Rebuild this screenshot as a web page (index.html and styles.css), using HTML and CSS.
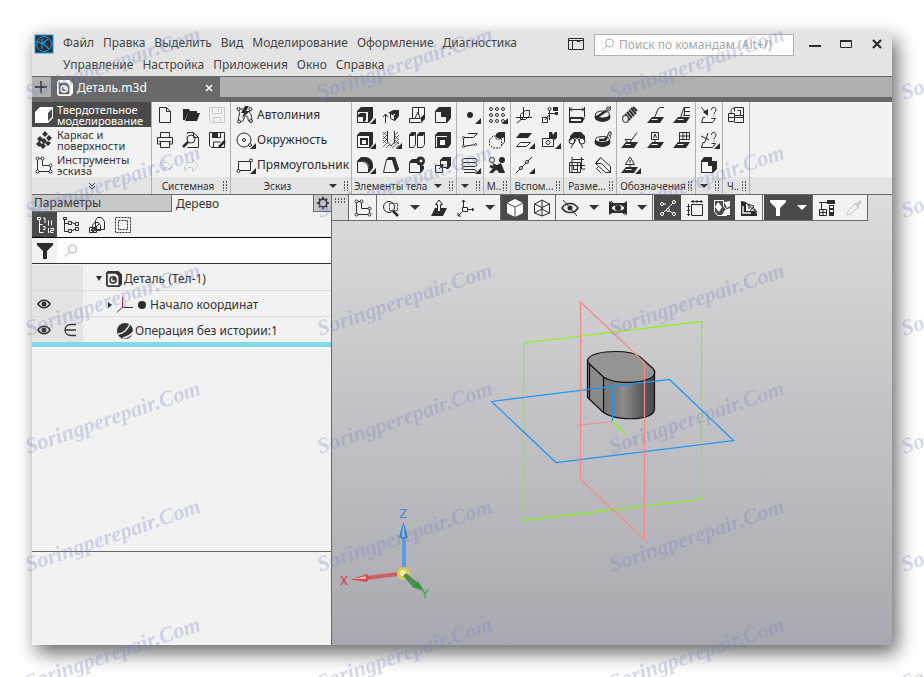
FILE: index.html
```
<!DOCTYPE html>
<html lang="ru">
<head>
    <meta charset="UTF-8">
    <meta name="viewport" content="width=device-width, initial-scale=1.0">
    <title>Деталь.m3d</title>
    <link rel="stylesheet" href="styles.css">
</head>
<body>
    <!-- Icon sprite -->
    <svg class="sprite" aria-hidden="true">
        <symbol id="i-new" viewBox="0 0 18 18"><path d="M3.5 1.5h7l4 4v11h-11zM10.5 1.5v4h4"/></symbol>
        <symbol id="i-open" viewBox="0 0 18 18"><path class="f" d="M1 3h6l1 2h7v2H6L3 14H1z"/><path class="f" d="M6 7h12l-3 8H3z"/></symbol>
        <symbol id="i-save" viewBox="0 0 18 18"><path d="M1.5 1.5h15v15h-13l-2-2zM4.5 1.5v6h9v-6M5.5 16.5v-5h7v5M10.5 3v3"/></symbol>
        <symbol id="i-print" viewBox="0 0 18 18"><path d="M4.5 6V1.5h9V6M4.5 13h-3V6.5h15V13h-3M4.5 10.5h9v6h-9zM3 10.5h12"/></symbol>
        <symbol id="i-preview" viewBox="0 0 18 18"><path d="M5.5 3V1.5h6l5 5v10h-11M11.5 1.5v5h5"/><circle cx="9" cy="8" r="4"/><path class="b" d="M6 11l-5 5"/></symbol>
        <symbol id="i-saveas" viewBox="0 0 18 18"><path d="M1.5 1.5h15v15h-13l-2-2z"/><path class="f" d="M4 1h9v6H4z"/><path class="w" d="M10 2h2v4h-2z"/><path d="M5.5 16v-5h7"/><path class="b" d="M17 10l-6 6"/></symbol>
        <symbol id="i-undo" viewBox="0 0 18 18"><path d="M8.5 3.5l-6 6 6 6v-4h3l3 3v-5l-3-3h-3z"/></symbol>
        <symbol id="i-redo" viewBox="0 0 18 18"><path d="M10.5 3.5l6 6-6 6v-4h-4l-4 3v-4l4-4h4z"/></symbol>

        <symbol id="i-solid" viewBox="0 0 18 18"><path class="f" d="M0 6l5-5h13v11l-5 5H0z"/><path class="k" d="M13 7l4-4v8l-4 4z"/></symbol>
        <symbol id="i-surface" viewBox="0 0 18 18"><path class="f" d="M10 0l3 3-3 3-3-3zM5 5l3 3-3 3-3-3zM14 4l3 3-3 3-3-3zM9 7l3 3-3 3-3-3zM4 10l3 3-3 3-3-3zM13 10l3 2-3 3-3-3zM8 12l3 3-3 3-3-3z"/></symbol>
        <symbol id="i-sketch" viewBox="0 0 18 18"><path d="M2.5 2.5h5v7h8v6h-13z"/><circle class="p" cx="2.5" cy="2.5" r="1.5"/><circle class="p" cx="7.5" cy="2.5" r="1.5"/><circle class="p" cx="15.5" cy="9.5" r="1.5"/><circle class="p" cx="15.5" cy="15.5" r="1.5"/><circle class="p" cx="2.5" cy="15.5" r="1.5"/></symbol>

        <symbol id="i-auto" viewBox="0 0 18 18"><path d="M2 3h5M2.5 4c3 4-1 6 0 11M14 4c-2 3 4 6 1 11M4 16c5 0 3-6 6-6s1 5 4 6"/><circle class="p" cx="2.5" cy="3" r="1.5"/><circle class="p" cx="14.5" cy="3" r="1.5"/><circle class="p" cx="3" cy="15.5" r="1.5"/><circle class="p" cx="15" cy="15" r="1.5"/><path class="f" d="M9 0h4L10 5h4L6 12l2-5H5z"/></symbol>
        <symbol id="i-circle" viewBox="0 0 18 18"><circle cx="8" cy="9" r="7"/><circle cx="8" cy="9" r="1.5"/><circle class="p" cx="14" cy="14" r="1.5"/></symbol>
        <symbol id="i-rect" viewBox="0 0 18 18"><path d="M2.5 5.5h12v9h-12z"/><circle class="p" cx="15" cy="4.5" r="1.5"/><circle class="p" cx="2.5" cy="15" r="1.5"/></symbol>

        <symbol id="i-extrude" viewBox="0 0 18 18"><path class="f" d="M1 5l4-4h12v11l-4 5V6H1z"/><path class="p" d="M1.5 5.5h11v11h-11z"/><path class="f" d="M1 10l3-3h6v7l-3 3v-7z"/><path class="p" d="M1.5 10.5h6v6h-6z"/></symbol>
        <symbol id="i-bend" viewBox="0 0 18 18"><path d="M3.5 17V8M1 11l2.5-3L6 11M8.5 7.5l4 2v5l-4-2z"/><path class="f" d="M6 7l5-3h6l-4 4H9zM13 8l4-4v6l-4 5z"/></symbol>
        <symbol id="i-rib" viewBox="0 0 18 18"><path d="M4.5 12.5v-11h12v11l-4 4h-11v-4zM1.5 12.5h11l4-4M10.5 2v7M7 12l3-6 2 6"/><path class="f" d="M13 12l4-4v5l-4 4z"/></symbol>
        <symbol id="i-cut" viewBox="0 0 18 18"><path class="f" d="M1 5l4-4h12v11l-4 5V6H1z"/><path class="p" d="M1.5 5.5h11v11h-11z"/><path class="f" d="M7 5h6v6H7z"/></symbol>
        <symbol id="i-frame" viewBox="0 0 18 18"><path class="f" d="M1 4l3-3h13v12l-3 4H1z"/><path class="w" d="M2 5h11v11H2z"/><path class="f" d="M4 7h8v7H4z"/><path class="w" d="M6 9h4v4H6z"/></symbol>
        <symbol id="i-hole" viewBox="0 0 18 18"><path class="t" d="M1 4l3-3M1 8l4-4M1 12l4-4M1 16l4-4M4 17l3-3M12 5l4-4M12 9l5-5M12 13l5-5M10 17l7-6M14 17l3-3M1 1l4 4M1 5l4 4M1 9l4 4M13 5l4 4M13 9l4 4"/><path class="p" d="M5.5 0v11l3.5 4 3.5-4V0"/></symbol>
        <symbol id="i-slabs" viewBox="0 0 18 18"><path d="M1.5 4.5l2-3h4v12l-2 3h-4zM9.5 4.5l2-3h5v12l-2 3h-5z"/><path class="f" d="M1 4l3-3h4L6 5H1zM9 4l3-3h5l-2 4H9z"/></symbol>
        <symbol id="i-shell" viewBox="0 0 18 18"><path class="f" d="M1 4l3-3h13v12l-3 4H1z"/><path class="w" d="M2 5h11v1H3v10H2z"/><path class="w" d="M6 9h5v5H6z"/></symbol>
        <symbol id="i-fillet" viewBox="0 0 18 18"><path d="M1.5 5.5v11h11v-4c0-4-3-7-7-7z"/><path class="f" d="M1 5l4-4h4c5 0 8 4 8 8v3l-4 5v-5c0-4-3-7-7-7z"/></symbol>
        <symbol id="i-draft" viewBox="0 0 18 18"><path d="M1.5 16.5l3-13 2-2h6l4 12-3 3z"/><path class="f" d="M4 4l3-3h6l4 12-3 4-4-13z"/></symbol>
        <symbol id="i-ball" viewBox="0 0 18 18"><path d="M1.5 6.5h11v10h-11z"/><path class="f" d="M1 6l3-3h5v3zM13 9l3 1v3l-3 4z"/><circle class="f" cx="12.5" cy="5" r="4.5"/><circle class="p" cx="13" cy="5" r="2"/></symbol>
        <symbol id="i-scale" viewBox="0 0 18 18"><path class="f" d="M6 4l3-3h8v9l-3 3h-2V6H6z"/><path class="p" d="M6.5 4.5h7v7h-7zM1.5 9.5h7v7h-7z"/><path d="M5 13l4-4M6.5 8.5H9V11"/></symbol>

        <symbol id="i-point" viewBox="0 0 18 18"><circle class="f" cx="9" cy="9" r="3"/></symbol>
        <symbol id="i-spline" viewBox="0 0 18 18"><path d="M2.5 6.5h10l4-4H7M2.5 6.5v9l12-2"/><circle class="p" cx="2.5" cy="6.5" r="1"/><circle class="p" cx="2.5" cy="15.5" r="1"/><circle class="p" cx="14.5" cy="13.5" r="1"/></symbol>
        <symbol id="i-spiral" viewBox="0 0 18 18"><path d="M15 2.5H4c-4 0-4 4 0 4h9c4 0 4 4 0 4H4c-4 0-4 3 0 3h9c3 0 3 3 0 3H3M4 6.5h9M4 10.5h9M13 2.5c4 0 4 4 0 4M4 10.5c-4 0-4-4 0-4"/></symbol>
        <symbol id="i-array" viewBox="0 0 18 18"><circle cx="3" cy="3" r="1.5"/><circle cx="9" cy="3" r="1.5"/><circle cx="15" cy="3" r="1.5"/><circle cx="3" cy="9" r="1.5"/><circle cx="9" cy="9" r="1.5"/><circle cx="15" cy="9" r="1.5"/><circle cx="3" cy="15" r="1.5"/><circle cx="9" cy="15" r="1.5"/><circle cx="15" cy="15" r="1.5"/></symbol>
        <symbol id="i-copy3d" viewBox="0 0 18 18"><path class="d" d="M8 5H5L1.5 9v5l4 3h6l2-2V8H8z"/><path d="M13.5 14l3-3V4"/><path class="f" d="M8 3l3-2h6v5l-5 2-4-2z"/></symbol>
        <symbol id="i-mirror" viewBox="0 0 18 18"><circle cx="4" cy="4" r="2.5"/><circle class="f" cx="14" cy="4" r="3"/><path class="f" d="M4 7l5 2 4-2 2 5 2 5h-6l-2-4-4 4H1l5-6z"/><path class="b" d="M2 10l14 6"/></symbol>
        <symbol id="i-plane3" viewBox="0 0 18 18"><path d="M1 11.5h16M8.5 1v11M2 17l6-5M5.5 8.5l5-4h4v5l-4 4h-5z"/></symbol>
        <symbol id="i-lcs" viewBox="0 0 18 18"><path d="M8.5 2v12M7 7.5h9M1.5 11.5h5v5h-5zM4 14l5-6"/><path class="f" d="M12 1h5v4h-5zM14 6h3v3h-3z"/><circle class="p" cx="8.5" cy="3" r="1.5"/></symbol>
        <symbol id="i-planes" viewBox="0 0 18 18"><path class="f" d="M5 2h12l-4 5H1z"/><path d="M5.5 11.5h10l-4 4h-10z"/></symbol>
        <symbol id="i-cam" viewBox="0 0 18 18"><path class="f" d="M8 1h3l1 3 2-3h2v6l-3 2H8z"/><path class="p" d="M1.5 7.5h11v8h-11z"/><circle cx="7" cy="11.5" r="2"/></symbol>
        <symbol id="i-axis" viewBox="0 0 18 18"><path d="M1 17L17 1"/><circle class="p" cx="6" cy="12" r="1.5"/><circle class="p" cx="12" cy="6" r="1.5"/></symbol>
        <symbol id="i-dim1" viewBox="0 0 18 18"><path d="M1.5 1v16M16.5 1v10M2 3.5h14M4 1.5l-2 2 2 2M14 1.5l2 2-2 2M1.5 11.5h14"/><path class="f" d="M1 12h16l-3 5H1z"/><path class="w" d="M3 13h10v2H3z"/></symbol>
        <symbol id="i-dim2" viewBox="0 0 18 18"><ellipse class="f" cx="8.5" cy="11" rx="8" ry="5"/><ellipse class="p" cx="8.5" cy="8.5" rx="7" ry="3.5"/><path class="b" d="M3 11l9-6"/><circle cx="14.5" cy="3" r="2"/><path d="M12 6l5-6"/></symbol>
        <symbol id="i-dim3" viewBox="0 0 18 18"><path class="f" d="M2 5l4-4h7l4 4v5l-3-3H5l-3 3z"/><circle cx="4" cy="10" r="3"/><circle cx="14" cy="10" r="3"/><path d="M9 6l-6 11M9 6l6 11"/></symbol>
        <symbol id="i-dim4" viewBox="0 0 18 18"><ellipse class="f" cx="8.5" cy="11" rx="8" ry="5"/><ellipse class="p" cx="8.5" cy="8.5" rx="7" ry="3"/><path class="b" d="M5 9h6l2-3"/><path d="M13 6l2-5h2v3h-2l2 3"/></symbol>
        <symbol id="i-dim5" viewBox="0 0 18 18"><path d="M1.5 6.5h11v10h-11zM4 1v16M4 3.5h12M13.5 1v12h4M5.5 9.5h4v4h-4zM1 9.5h16M9.5 6v11"/></symbol>
        <symbol id="i-dim6" viewBox="0 0 18 18"><path d="M6.5 1.5l10 9v6h-5l-10-9zM1.5 7.5h6l9 9M6.5 1.5l-5 6M3 13l4 4M4 11l-2 2"/></symbol>
        <symbol id="i-thread" viewBox="0 0 18 18"><path class="h" d="M2 10l5 6M4 8l5 6M6 6l5 6M8 4l5 6M10 2l5 6M12 1l4 4"/><ellipse class="p" cx="4.5" cy="13" rx="3" ry="3.5"/></symbol>
        <symbol id="i-rough" viewBox="0 0 18 18"><path d="M7 13l4-10 2-1.5h4"/><path class="f" d="M5 11h12l-4 6H0z"/><path class="w" d="M5 13h6l-1 1H4z"/></symbol>
        <symbol id="i-leader" viewBox="0 0 18 18"><path d="M7 13l4-11.5h6M11.5 5.5H17M10 9.5h7M11.5 1v9"/><path class="f" d="M5 11h12l-4 6H0z"/><path class="w" d="M5 13h6l-1 1H4z"/></symbol>
        <symbol id="i-base" viewBox="0 0 18 18"><path class="f" d="M5 11h12l-4 6H0z"/><path class="w" d="M5 13h5l-1 1H4z"/><path d="M4 8.5l4 4 8-11M4 8.5h7"/></symbol>
        <symbol id="i-mark" viewBox="0 0 18 18"><path class="f" d="M5 11h12l-4 6H0z"/><path class="w" d="M5 13h6l-1 1H4z"/><path class="p" d="M4.5 1.5h7v7h-7z"/><path d="M8 9v4M6.5 7L8 3l1.5 4"/></symbol>
        <symbol id="i-tol" viewBox="0 0 18 18"><path class="f" d="M5 11h12l-4 6H0z"/><path class="w" d="M5 13h6l-1 1H4z"/><path class="p" d="M6.5 1.5h10v7h-10z"/><path d="M6.5 5h10M10 1.5v7M13.5 1.5v7M6.5 8v5"/></symbol>
        <symbol id="i-weld" viewBox="0 0 18 18"><path class="f" d="M5 11h12l-4 6H0z"/><path class="w" d="M5 13h6l-1 1H4z"/><path class="p" d="M9 1L4.5 8.5h9z"/><path d="M9 4v3M9 8v5M7 11l2 2 2-2"/></symbol>
        <symbol id="i-info" viewBox="0 0 18 18"><path d="M1 1l6 7M11.5 4c0-4 5-3 4.5 0 0 2-2 2-2 4M14 9.5v1M5 11.5h-2L1.5 16.5h11l3-4h-4"/><path class="f" d="M3 6l5-3v7z"/></symbol>
        <symbol id="i-info2" viewBox="0 0 18 18"><path d="M1 5l8 4M8 2l-3 9M11.5 4c0-4 5-3 4.5 0 0 2-2 2-2 4M14 9.5v1M5 11.5h-2L1.5 16.5h11l3-4h-4"/></symbol>
        <symbol id="i-body" viewBox="0 0 18 18"><path class="f" d="M1 5l3-4h8v4h5v8l-4 4H1z"/><path class="w" d="M2 6h6v4h4v6H2z"/></symbol>
        <symbol id="i-draw" viewBox="0 0 18 18"><path d="M1.5 7.5h6v8h-6zM7.5 5.5v-4h9v15h-9M7.5 9.5h9M10.5 4.5h3v5M1.5 11.5h15M4 7c0-4 1-5 4-5"/></symbol>

        <symbol id="i-doc" viewBox="0 0 18 18"><path class="f" d="M5 0h9l4 4v11l-3 3H2l-2-2V2l2-2z"/><path class="c" d="M2 3h9l3 3v10H2z"/><circle class="r" cx="8" cy="10" r="3.5"/><circle class="f" cx="9" cy="9" r="2"/></symbol>
        <symbol id="i-lens" viewBox="0 0 14 14"><circle cx="8.5" cy="5" r="4"/><path d="M5.5 8L1 12.5"/></symbol>
        <symbol id="i-tree1" viewBox="0 0 18 18"><path d="M3.5 3v13.5h4M3.5 8.5h3M1.5 1.5h3v2h-3zM7 2h2v5M12.5 4.5v5M15.5 4.5v5M12.5 12v5M14.5 12.5h3v2h-3v2h3M7 10.5h2v3H7"/></symbol>
        <symbol id="i-tree2" viewBox="0 0 18 18"><path d="M2.5 4v11.5h5M2.5 7.5h5M9 6l4 2M9 15l5-2"/><path class="p" d="M1.5 1.5h3v2h-3zM6.5 5.5h3v3h-3zM6.5 13.5h3v3h-3zM13.5 6.5h3v3h-3zM13.5 11.5h3v3h-3z"/></symbol>
        <symbol id="i-tree3" viewBox="0 0 18 18"><path class="p" d="M7.5 4.5l2-3h4l3 4v8h-9zM4.5 9.5l2-3h4l2 3v5h-8zM1.5 11.5h7v5h-7z"/><circle cx="5" cy="14" r="1.5"/><path d="M6 13l5-5"/></symbol>
        <symbol id="i-tree4" viewBox="0 0 18 18"><path class="d" d="M1.5 1.5h15v15h-15zM4.5 4.5h9v9h-9z"/></symbol>
        <symbol id="i-funnel" viewBox="0 0 18 18"><path class="f" d="M1 1h16v2l-6 6v8H7V9L1 3z"/></symbol>
        <symbol id="i-gear" viewBox="0 0 18 18"><circle class="g" cx="9" cy="9" r="5"/><path class="h" d="M9 1v3M9 14v3M1 9h3M14 9h3M3.5 3.5l2 2M12.5 12.5l2 2M14.5 3.5l-2 2M5.5 12.5l-2 2"/></symbol>
        <symbol id="i-eye" viewBox="0 0 14 10"><path class="e" d="M1 5c3-5 9-5 12 0-3 5-9 5-12 0z"/><circle class="f" cx="7" cy="5" r="2.5"/></symbol>
        <symbol id="i-member" viewBox="0 0 14 14"><path class="n" d="M13 1.5H8c-8 0-8 11 0 11h5M2 7h11"/></symbol>
        <symbol id="i-origin" viewBox="0 0 18 18"><path class="m" d="M6.5 1v10"/><path d="M6 11.5h11M6 11.5l-5 5"/></symbol>
        <symbol id="i-op" viewBox="0 0 18 18"><circle class="f" cx="9" cy="9" r="8"/><path class="s" d="M2 12c6 0 9-4 12-10M7 16c5-1 8-3 10-6"/></symbol>

        <symbol id="i-zoom" viewBox="0 0 18 18"><circle cx="7" cy="8" r="5.5"/><path class="b" d="M11 12l5 5"/><path class="d" d="M7.5 4.5h8v7h-8z"/></symbol>
        <symbol id="i-normal" viewBox="0 0 18 18"><path class="f" d="M5 9h12l-4 8H1z"/><path class="p" d="M7.5 12.5v-7h-2L9 1l3.5 4.5h-2v7z"/></symbol>
        <symbol id="i-orient" viewBox="0 0 18 18"><path d="M6.5 8V1M5 3l1.5-2L8 3M11 10.5h6M15 9l2 1.5-2 1.5M5 13l-4 4M1 14v3h3"/><path d="M5.5 8.5h5v4h-5z"/></symbol>
        <symbol id="i-cube" viewBox="0 0 18 18"><path class="f" d="M9 0l8 4v10l-8 4-8-4V4z"/><path class="k2" d="M1 4l8 4 8-4M9 8v10"/></symbol>
        <symbol id="i-wire" viewBox="0 0 18 18"><path d="M9 1l7.5 4v9L9 17l-7.5-3V5zM1.5 5L9 8.5 16.5 5M9 8.5V17M9 1v9l-7.5 4M9 10l7.5 4"/></symbol>
        <symbol id="i-hide" viewBox="0 0 18 18"><path class="e" d="M1 9c4-6 12-6 16 0-4 6-12 6-16 0z"/><circle class="f" cx="9" cy="9" r="2.5"/><path d="M2 1l14 16"/></symbol>
        <symbol id="i-hide2" viewBox="0 0 18 18"><path class="f" d="M0 2l3 2h12l3-2v14l-3-2H3l-3 2z"/><path class="p" d="M2 9c4-5 10-5 14 0-4 5-10 5-14 0z"/><circle class="f" cx="9" cy="9" r="3"/><path d="M2 2l14 14"/></symbol>
        <symbol id="i-snap" viewBox="0 0 18 18"><path d="M3 15L15 3M3 5h4M9 11l6 4"/><circle class="p" cx="3" cy="5" r="1.5"/><circle class="p" cx="15" cy="3" r="1.5"/><circle class="p" cx="3" cy="15" r="1.5"/><circle class="p" cx="9" cy="11" r="1.5"/><circle class="p" cx="15" cy="15" r="1.5"/></symbol>
        <symbol id="i-dims" viewBox="0 0 18 18"><path d="M5.5 5.5h11v11h-11zM5 2.5h12M7 1v3M11 1v3M15 1v3M2.5 5v12M1 7.5h3M1 11.5h3M1 15.5h3"/></symbol>
        <symbol id="i-parts" viewBox="0 0 18 18"><path d="M1.5 1.5h9v6l3 3v6h-9l-3-4z"/><path class="f" d="M2 8l3-5 4 5-3 5zM11 3l6-1v5l-3 2zM12 11l5-2v7H9z"/></symbol>
        <symbol id="i-angle" viewBox="0 0 18 18"><path class="f" d="M1 2l5 1v9h8l3 2v3H1z"/><path class="s" d="M3 7v7h8"/><path d="M5 3l11 10M7 5l7 2-4 5M9 5v5M13 8l4 5"/></symbol>
        <symbol id="i-crane" viewBox="0 0 18 18"><path d="M1 3.5h16M3.5 4v6M1.5 10.5h7v6h-7zM1.5 13.5h7M5 10.5v6"/><path class="f" d="M9 1h8v4H9zM11 6h5v11h-5z"/><path class="w" d="M12 7h3v2h-3zM12 11h3v2h-3z"/></symbol>
        <symbol id="i-pick" viewBox="0 0 18 18"><path d="M2 16l1-4 7-7 3 3-7 7z"/><path class="f" d="M9 4h3l3-3 2 2-3 3v4z"/></symbol>
    </svg>

    <div class="window">
        <header class="titlebar">
            <svg class="logo" viewBox="0 0 20 20"><rect x="1" y="1" width="18" height="18"/><circle cx="10" cy="10" r="7.5"/><path d="M8 5v10M8 10l6-5M9 9l6 6M3 7l5 3"/></svg>
            <nav class="menu">
                <a href="#">Файл</a>
                <a href="#">Правка</a>
                <a href="#">Выделить</a>
                <a href="#">Вид</a>
                <a href="#">Моделирование</a>
                <a href="#">Оформление</a>
                <a href="#">Диагностика</a>
                <a href="#">Управление</a>
                <a href="#">Настройка</a>
                <a href="#">Приложения</a>
                <a href="#">Окно</a>
                <a href="#">Справка</a>
            </nav>
            <button class="win-btn layout-btn" aria-label="Раскладка"><svg viewBox="0 0 16 12"><path d="M.5.5h15v11H.5zM.5 2.5h15M4.5 2.5v9"/><path class="f" d="M8 2h5l-1 2H9z"/></svg></button>
            <label class="search">
                <svg class="lens"><use href="#i-lens"/></svg>
                <input type="text" placeholder="Поиск по командам (Alt+/)" aria-label="Поиск по командам">
            </label>
            <div class="win-controls">
                <button class="win-btn" aria-label="Свернуть"><svg viewBox="0 0 12 12"><path class="f" d="M0 7h12v2H0z"/></svg></button>
                <button class="win-btn" aria-label="Развернуть"><svg viewBox="0 0 12 12"><path d="M.5 2.5h11v7H.5z"/><path class="f" d="M0 2h12v2H0z"/></svg></button>
                <button class="win-btn" aria-label="Закрыть"><svg viewBox="0 0 12 12"><path class="x" d="M2 2l8 8M10 2l-8 8"/></svg></button>
            </div>
        </header>

        <div class="doc-tabs">
            <button class="add-tab" aria-label="Новый документ"><svg viewBox="0 0 12 12"><path d="M6 0v12M0 6h12"/></svg></button>
            <div class="doc-tab">
                <svg class="doc-icon"><use href="#i-doc"/></svg>
                <span>Деталь.m3d</span>
                <button class="close-tab" aria-label="Закрыть вкладку"><svg viewBox="0 0 8 8"><path d="M1 1l6 6M7 1L1 7"/></svg></button>
            </div>
        </div>

        <div class="ribbon">
            <div class="group modes">
                <button class="mode active"><svg class="icon"><use href="#i-solid"/></svg><span>Твердотельное<br>моделирование</span></button>
                <button class="mode"><svg class="icon"><use href="#i-surface"/></svg><span>Каркас и<br>поверхности</span></button>
                <button class="mode"><svg class="icon"><use href="#i-sketch"/></svg><span>Инструменты<br>эскиза</span></button>
                <button class="more" aria-label="Ещё"><svg viewBox="0 0 8 8"><path d="M1 1l3 3 3-3M1 4l3 3 3-3"/></svg></button>
            </div>
            <div class="group">
                <div class="tools cols-3">
                    <button class="tool" aria-label="Создать"><svg class="icon"><use href="#i-new"/></svg></button>
                    <button class="tool" aria-label="Открыть"><svg class="icon"><use href="#i-open"/></svg></button>
                    <button class="tool off" aria-label="Сохранить"><svg class="icon"><use href="#i-save"/></svg></button>
                    <button class="tool" aria-label="Печать"><svg class="icon"><use href="#i-print"/></svg></button>
                    <button class="tool" aria-label="Предварительный просмотр"><svg class="icon"><use href="#i-preview"/></svg></button>
                    <button class="tool" aria-label="Сохранить как"><svg class="icon"><use href="#i-saveas"/></svg></button>
                    <button class="tool off" aria-label="Отменить"><svg class="icon"><use href="#i-undo"/></svg></button>
                    <button class="tool off" aria-label="Повторить"><svg class="icon"><use href="#i-redo"/></svg></button>
                </div>
                <div class="caption"><span>Системная</span><i class="grip"></i></div>
            </div>
            <div class="group sketch">
                <div class="tools cols-1">
                    <button class="tool wide"><svg class="icon"><use href="#i-auto"/></svg>Автолиния</button>
                    <button class="tool wide more-menu"><svg class="icon"><use href="#i-circle"/></svg>Окружность</button>
                    <button class="tool wide more-menu"><svg class="icon"><use href="#i-rect"/></svg>Прямоугольник</button>
                </div>
                <div class="caption"><span>Эскиз</span><i class="arrow"></i><i class="grip"></i></div>
            </div>
            <div class="group">
                <div class="tools cols-4">
                    <button class="tool more-menu" aria-label="Элемент выдавливания"><svg class="icon"><use href="#i-extrude"/></svg></button>
                    <button class="tool" aria-label="Придать толщину"><svg class="icon"><use href="#i-bend"/></svg></button>
                    <button class="tool" aria-label="Ребро жёсткости"><svg class="icon"><use href="#i-rib"/></svg></button>
                    <button class="tool" aria-label="Сечение"><svg class="icon"><use href="#i-cut"/></svg></button>
                    <button class="tool more-menu" aria-label="Вырезать"><svg class="icon"><use href="#i-frame"/></svg></button>
                    <button class="tool more-menu" aria-label="Отверстие"><svg class="icon"><use href="#i-hole"/></svg></button>
                    <button class="tool" aria-label="Разрезать"><svg class="icon"><use href="#i-slabs"/></svg></button>
                    <button class="tool" aria-label="Оболочка"><svg class="icon"><use href="#i-shell"/></svg></button>
                    <button class="tool more-menu" aria-label="Скругление"><svg class="icon"><use href="#i-fillet"/></svg></button>
                    <button class="tool" aria-label="Уклон"><svg class="icon"><use href="#i-draft"/></svg></button>
                    <button class="tool" aria-label="Булева операция"><svg class="icon"><use href="#i-ball"/></svg></button>
                    <button class="tool" aria-label="Масштабирование"><svg class="icon"><use href="#i-scale"/></svg></button>
                </div>
                <div class="caption"><span>Элементы тела</span><i class="arrow"></i><i class="grip"></i></div>
            </div>
            <div class="group">
                <div class="tools cols-1">
                    <button class="tool more-menu" aria-label="Точка"><svg class="icon"><use href="#i-point"/></svg></button>
                    <button class="tool" aria-label="Ломаная"><svg class="icon"><use href="#i-spline"/></svg></button>
                    <button class="tool more-menu" aria-label="Спираль"><svg class="icon"><use href="#i-spiral"/></svg></button>
                </div>
                <div class="caption"><i class="arrow"></i><i class="grip"></i></div>
            </div>
            <div class="group">
                <div class="tools cols-1">
                    <button class="tool more-menu" aria-label="Массив по сетке"><svg class="icon"><use href="#i-array"/></svg></button>
                    <button class="tool" aria-label="Копия"><svg class="icon"><use href="#i-copy3d"/></svg></button>
                    <button class="tool" aria-label="Зеркальный массив"><svg class="icon"><use href="#i-mirror"/></svg></button>
                </div>
                <div class="caption"><span>М..</span><i class="grip"></i></div>
            </div>
            <div class="group">
                <div class="tools cols-2">
                    <button class="tool" aria-label="Контрольная точка"><svg class="icon"><use href="#i-plane3"/></svg></button>
                    <button class="tool" aria-label="Локальная система координат"><svg class="icon"><use href="#i-lcs"/></svg></button>
                    <button class="tool more-menu" aria-label="Плоскость"><svg class="icon"><use href="#i-planes"/></svg></button>
                    <button class="tool more-menu" aria-label="Объект"><svg class="icon"><use href="#i-cam"/></svg></button>
                    <button class="tool more-menu" aria-label="Ось"><svg class="icon"><use href="#i-axis"/></svg></button>
                </div>
                <div class="caption"><span>Вспом...</span><i class="grip"></i></div>
            </div>
            <div class="group">
                <div class="tools cols-2">
                    <button class="tool" aria-label="Линейный размер"><svg class="icon"><use href="#i-dim1"/></svg></button>
                    <button class="tool" aria-label="Диаметр"><svg class="icon"><use href="#i-dim2"/></svg></button>
                    <button class="tool" aria-label="Угловой размер"><svg class="icon"><use href="#i-dim3"/></svg></button>
                    <button class="tool" aria-label="Радиус"><svg class="icon"><use href="#i-dim4"/></svg></button>
                    <button class="tool" aria-label="Авторазмер"><svg class="icon"><use href="#i-dim5"/></svg></button>
                    <button class="tool" aria-label="Размер фаски"><svg class="icon"><use href="#i-dim6"/></svg></button>
                </div>
                <div class="caption"><span>Разме...</span><i class="grip"></i></div>
            </div>
            <div class="group">
                <div class="tools cols-3">
                    <button class="tool" aria-label="Резьба"><svg class="icon"><use href="#i-thread"/></svg></button>
                    <button class="tool" aria-label="Выноска"><svg class="icon"><use href="#i-rough"/></svg></button>
                    <button class="tool" aria-label="Надпись"><svg class="icon"><use href="#i-leader"/></svg></button>
                    <button class="tool" aria-label="Шероховатость"><svg class="icon"><use href="#i-base"/></svg></button>
                    <button class="tool" aria-label="База"><svg class="icon"><use href="#i-mark"/></svg></button>
                    <button class="tool" aria-label="Допуск формы"><svg class="icon"><use href="#i-tol"/></svg></button>
                    <button class="tool more-menu" aria-label="Клеймо"><svg class="icon"><use href="#i-weld"/></svg></button>
                </div>
                <div class="caption"><span>Обозначения</span><i class="grip"></i></div>
            </div>
            <div class="group">
                <div class="tools cols-1">
                    <button class="tool" aria-label="Информация"><svg class="icon"><use href="#i-info"/></svg></button>
                    <button class="tool more-menu" aria-label="Измерение"><svg class="icon"><use href="#i-info2"/></svg></button>
                    <button class="tool" aria-label="Тело"><svg class="icon"><use href="#i-body"/></svg></button>
                </div>
                <div class="caption"><i class="arrow"></i><i class="grip"></i></div>
            </div>
            <div class="group">
                <div class="tools cols-1">
                    <button class="tool" aria-label="Создать чертёж"><svg class="icon"><use href="#i-draw"/></svg></button>
                </div>
                <div class="caption"><span>Ч..</span><i class="grip"></i></div>
            </div>
        </div>

        <main class="work">
            <aside class="panel">
                <div class="panel-tabs">
                    <button class="panel-tab">Параметры</button>
                    <button class="panel-tab current">Дерево</button>
                    <button class="panel-gear" aria-label="Настройки панели"><svg><use href="#i-gear"/></svg></button>
                </div>
                <div class="panel-tools">
                    <button class="tool dark" aria-label="Последовательность"><svg class="icon"><use href="#i-tree1"/></svg></button>
                    <button class="tool" aria-label="Структура"><svg class="icon"><use href="#i-tree2"/></svg></button>
                    <button class="tool" aria-label="Исполнения"><svg class="icon"><use href="#i-tree3"/></svg></button>
                    <button class="tool" aria-label="Область"><svg class="icon"><use href="#i-tree4"/></svg></button>
                </div>
                <div class="filter">
                    <button class="tool" aria-label="Фильтр"><svg class="icon"><use href="#i-funnel"/></svg></button>
                    <label class="filter-box">
                        <svg class="lens"><use href="#i-lens"/></svg>
                        <input type="text" aria-label="Поиск в дереве">
                    </label>
                </div>
                <ul class="tree">
                    <li>
                        <div class="flags"></div>
                        <div class="node root"><i class="open"></i><svg class="doc-icon"><use href="#i-doc"/></svg>Деталь (Тел-1)</div>
                    </li>
                    <li>
                        <div class="flags"><svg class="eye"><use href="#i-eye"/></svg></div>
                        <div class="node origin"><i class="closed"></i><svg class="icon"><use href="#i-origin"/></svg><i class="dot"></i>Начало координат</div>
                    </li>
                    <li>
                        <div class="flags"><svg class="eye"><use href="#i-eye"/></svg><svg class="member"><use href="#i-member"/></svg></div>
                        <div class="node operation"><svg class="icon"><use href="#i-op"/></svg>Операция без истории:1</div>
                    </li>
                </ul>
                <div class="tree-end"></div>
                <div class="panel-bottom"></div>
            </aside>

            <section class="viewport">
                <div class="view-tools">
                    <div class="view-grip"><i></i></div>
                    <div class="set">
                        <button class="tool" aria-label="Эскиз"><svg class="icon"><use href="#i-sketch"/></svg></button>
                    </div>
                    <div class="set">
                        <button class="tool" aria-label="Масштаб"><svg class="icon"><use href="#i-zoom"/></svg></button>
                        <button class="drop" aria-label="Варианты масштаба"><i class="arrow"></i></button>
                        <button class="tool" aria-label="Нормально к"><svg class="icon"><use href="#i-normal"/></svg></button>
                        <button class="tool" aria-label="Ориентация"><svg class="icon"><use href="#i-orient"/></svg></button>
                        <button class="drop" aria-label="Варианты ориентации"><i class="arrow"></i></button>
                    </div>
                    <div class="set">
                        <button class="tool dark" aria-label="Полутоновое"><svg class="icon"><use href="#i-cube"/></svg></button>
                        <button class="tool" aria-label="Каркас"><svg class="icon"><use href="#i-wire"/></svg></button>
                    </div>
                    <div class="set">
                        <button class="tool" aria-label="Скрыть"><svg class="icon"><use href="#i-hide"/></svg></button>
                        <button class="drop" aria-label="Варианты скрытия"><i class="arrow"></i></button>
                        <button class="tool" aria-label="Показать"><svg class="icon"><use href="#i-hide2"/></svg></button>
                        <button class="drop" aria-label="Варианты показа"><i class="arrow"></i></button>
                    </div>
                    <div class="set lit">
                        <button class="tool dark" aria-label="Привязки"><svg class="icon"><use href="#i-snap"/></svg></button>
                        <button class="tool" aria-label="Размеры"><svg class="icon"><use href="#i-dims"/></svg></button>
                        <button class="tool dark" aria-label="Компоненты"><svg class="icon"><use href="#i-parts"/></svg></button>
                        <button class="tool" aria-label="Сечение модели"><svg class="icon"><use href="#i-angle"/></svg></button>
                    </div>
                    <div class="set lit">
                        <button class="tool dark" aria-label="Фильтр объектов"><svg class="icon"><use href="#i-funnel"/></svg></button>
                        <button class="drop dark" aria-label="Варианты фильтра"><i class="arrow"></i></button>
                    </div>
                    <div class="set">
                        <button class="tool" aria-label="Построение"><svg class="icon"><use href="#i-crane"/></svg></button>
                        <button class="tool off" aria-label="Пипетка"><svg class="icon"><use href="#i-pick"/></svg></button>
                    </div>
                </div>

                <svg class="scene" viewBox="332 195 560 450">
                    <defs>
                        <linearGradient id="side" x1="603" x2="655" y1="0" y2="0" gradientUnits="userSpaceOnUse">
                            <stop offset="0" stop-color="#777"/>
                            <stop offset=".25" stop-color="#7e7e7e"/>
                            <stop offset=".4" stop-color="#8c8c8c"/>
                            <stop offset=".75" stop-color="#5a5a5a"/>
                            <stop offset="1" stop-color="#4a4a4a"/>
                        </linearGradient>
                    </defs>
                    <!-- body -->
                    <path fill="#8a8a8a" d="M587.5 361v36.5l16.5 15V377z"/>
                    <path fill="url(#side)" d="M603.5 377v35.5c10 7 34 8 45 3.5 4-2 6-4 6-6.5V372z"/>
                    <path class="edge" fill="#949492" d="M587.5 360c2-6 15-8.5 28-8.5 12 0 20 2 24 5l13.5 12c3 3 2 7-2 9.5-10 5-34 7-47-.5l-14.5-13.5c-1.5-1.5-2-2.5-2-4z"/>
                    <path class="edge" d="M587.5 360v37.5l16 15c10 7 34 8 45 3.5 4-2 6-4 6-6.5V372M603.5 377v35.5M589.5 364v35"/>
                    <!-- planes -->
                    <path class="plane green" d="M523.5 343l178-21.5v177.5l-178 21.5z"/>
                    <path class="plane blue" d="M491.5 401.5l178-22 64 61-177.5 22z"/>
                    <path class="plane red" d="M580.5 302l64 60.5v177l-64-60z"/>
                    <path class="plane blue" d="M612.5 386.5V421"/>
                    <path class="plane red" d="M577 425.5l35.5-4"/>
                    <path class="plane green" d="M612.5 421.5l12.5 12"/>
                    <!-- axes -->
                    <path fill="#5b9be6" d="M402 540h4v28h-4z"/>
                    <path fill="#3c82d0" d="M399 537l4.5-15 4.5 15-4.5 3z"/>
                    <path fill="#a5d2fa" d="M402 537l1.5-13 1 13z"/>
                    <path fill="#cf6060" d="M366 576l32-4v4l-32 4z"/>
                    <path fill="#d94747" d="M351 579.5l16-5.5 2 4-2 4z"/>
                    <path fill="#f2b5b5" d="M353 579l13-3v3z"/>
                    <circle cx="403.5" cy="573.5" r="6.5" fill="#d6cf58"/>
                    <circle cx="403" cy="573" r="3" fill="#f3efab"/>
                    <path fill="#4f8f52" d="M403 576l3-3 11 9-4 5z"/>
                    <path fill="#31983a" d="M412 587l6-6 6 10z"/>
                    <text x="399" y="518" fill="#4a86c8">Z</text>
                    <text x="340" y="585" fill="#d23a3a">X</text>
                    <text x="421" y="598" fill="#43a047">Y</text>
                </svg>
            </section>
        </main>
    </div>

    <svg class="watermark" aria-hidden="true">
        <pattern id="mark" width="292" height="118" patternUnits="userSpaceOnUse">
            <text transform="translate(28 100) rotate(-19)">Soringperepair.Com</text>
        </pattern>
        <rect width="100%" height="100%" fill="url(#mark)"/>
    </svg>
</body>
</html>
```

FILE: styles.css
```
* {
    box-sizing: border-box;
}
body {
    margin: 0;
    padding: 32px;
    height: 100vh;
    overflow: hidden;
    background: #fff;
    color: #333;
    font: 12px/16px "Noto Sans", sans-serif;
}
button, input {
    margin: 0;
    padding: 0;
    border: 0;
    background: none;
    color: inherit;
    font: inherit;
}
a {
    color: inherit;
    text-decoration: none;
}
svg {
    display: block;
    flex: none;
    fill: none;
    stroke: currentColor;
}
.sprite {
    position: absolute;
    width: 0;
    height: 0;
}

/* icon parts */
.f { fill: currentColor; stroke: none; }
.w { fill: #f7f7f7; stroke: none; }
.p { fill: var(--paper, #f2f2f2); }
.c { fill: var(--paper, #f2f2f2); stroke: none; }
.k { fill: #4a4a4a; stroke: none; }
.k2 { stroke: #4a4a4a; }
.b { stroke-width: 2.5; }
.h { stroke-width: 2; }
.e { stroke-width: 1.5; }
.g { stroke-width: 2; }
.n { stroke-width: 1.3; }
.r { stroke-width: 1.6; }
.t { stroke-width: 0.7; }
.d { stroke-dasharray: 2 1; }
.s { stroke: #f2f2f2; stroke-width: 1.5; }
.m { stroke: #8e2a5c; }
.x { stroke-width: 2.2; }

.window {
    display: flex;
    flex-direction: column;
    height: 100%;
    background: #f2f2f2;
    box-shadow: 5px 8px 18px rgba(0, 0, 0, 0.6);
}

/* title bar */
.titlebar {
    display: flex;
    align-items: flex-start;
    height: 45px;
    padding: 2px 9px 0 2px;
    background: #e4e4e4;
    border-bottom: 1px solid #696969;
}
.logo {
    width: 20px;
    height: 20px;
    margin-right: 9px;
    stroke: #1b9ae0;
    fill: #2b2f36;
}
.logo path {
    fill: none;
    stroke-width: 1.3;
}
.menu {
    flex: 1;
    display: flex;
    flex-wrap: wrap;
    gap: 0 9px;
    line-height: 22px;
    margin-top: -2px;
    color: #444;
}
.win-btn {
    padding: 4px 0;
    color: #2b2b2b;
}
.win-btn svg {
    width: 12px;
    height: 12px;
}
.layout-btn svg {
    width: 16px;
}
.search {
    display: flex;
    align-items: center;
    width: 200px;
    height: 22px;
    margin-left: 10px;
    padding-left: 6px;
    background: #fff;
    border: 1px solid #b0b0b0;
}
.lens {
    width: 14px;
    height: 14px;
    color: #aaa;
}
.search input {
    flex: 1;
    min-width: 0;
    margin-left: 4px;
}
.search input::placeholder {
    color: #a8a8a8;
    opacity: 1;
}
.win-controls {
    display: flex;
    gap: 19px;
    margin-left: 15px;
}

/* document tabs */
.doc-tabs {
    display: flex;
    height: 25px;
    background: #b0b0b0;
    border-bottom: 5px solid #696969;
}
.add-tab {
    width: 19px;
    padding: 0 3px;
    color: #222;
}
.add-tab svg {
    width: 12px;
    height: 12px;
    stroke-width: 1.3;
}
.doc-tab {
    display: flex;
    align-items: center;
    width: 169px;
    padding: 2px 7px 0 6px;
    background: #696969;
    color: #fff;
    --paper: #696969;
}
.doc-icon {
    width: 16px;
    height: 16px;
}
.doc-tab span {
    flex: 1;
    margin-left: 4px;
}
.close-tab svg {
    width: 8px;
    height: 8px;
    stroke-width: 1.5;
}

/* ribbon */
.ribbon {
    display: flex;
    height: 93px;
    background: linear-gradient(#f2f2f2 75px, #e4e4e4 75px);
    border-bottom: 1px solid #696969;
}
.group {
    display: flex;
    flex-direction: column;
    border-right: 1px solid #b0b0b0;
}
.modes {
    width: 120px;
}
.mode {
    display: flex;
    align-items: center;
    gap: 4px;
    height: 25px;
    padding-left: 3px;
    text-align: left;
    font-size: 11px;
    line-height: 11px;
}
.mode.active {
    background: #4a4a4a;
    color: #fff;
}
.more {
    display: flex;
    flex: 1;
    align-items: center;
    justify-content: center;
}
.more svg {
    width: 8px;
    height: 8px;
}
.icon {
    width: 18px;
    height: 18px;
}
.tools {
    display: grid;
    grid-template-rows: repeat(3, 25px);
}
.cols-1 { grid-template-columns: 26px; }
.cols-2 { grid-template-columns: repeat(2, 26px); }
.cols-3 { grid-template-columns: repeat(3, 26px); }
.cols-4 { grid-template-columns: repeat(4, 26px); }
.sketch .cols-1 { grid-template-columns: 120px; }
.tool {
    position: relative;
    display: flex;
    align-items: center;
    justify-content: center;
    color: #2b2b2b;
}
.tool.wide {
    justify-content: flex-start;
    gap: 3px;
    padding-left: 5px;
}
.tool.off {
    color: #c8ccc8;
}
.tool.dark,
.drop.dark {
    background: #4a4a4a;
    color: #fff;
    --paper: #4a4a4a;
}
.more-menu::after {
    content: "";
    position: absolute;
    right: 2px;
    bottom: 3px;
    border: 3px solid transparent;
    border-right-color: #2b2b2b;
    border-bottom-color: #2b2b2b;
}
.wide.more-menu::after {
    right: auto;
    left: 19px;
}
.caption {
    display: flex;
    flex: 1;
    align-items: center;
    justify-content: flex-end;
    gap: 7px;
    width: 0;
    min-width: 100%;
    padding: 0 2px;
    font-size: 10px;
}
.caption span {
    flex: 1;
    text-align: center;
    white-space: nowrap;
}
.caption span + .grip {
    margin-left: -6px;
}
.caption .grip {
    width: 5px;
    height: 10px;
    background: conic-gradient(transparent 75%, #555 0) 0 0 / 3px 3px;
}
.arrow {
    border: 4px solid transparent;
    border-top-color: currentColor;
    border-bottom: 0;
}

/* left panel */
.work {
    display: flex;
    flex: 1;
    min-height: 0;
}
.panel {
    display: flex;
    flex-direction: column;
    width: 300px;
    border-right: 1px solid #696969;
}
.panel-tabs {
    display: flex;
    height: 17px;
}
.panel-tab {
    width: 140px;
    padding-left: 2px;
    text-align: left;
    background: #c8c8c8;
    border-right: 1px solid #696969;
    border-bottom: 1px solid #696969;
}
.panel-tab.current {
    flex: 1;
    padding-left: 4px;
    background: none;
    border-bottom: 0;
}
.panel-gear {
    width: 17px;
    background: #c8c8c8;
    border-bottom: 1px solid #696969;
}
.panel-gear svg {
    width: 14px;
    height: 14px;
    margin: 0 auto;
}
.panel-tools {
    display: flex;
    height: 26px;
    border-bottom: 1px solid #000;
}
.panel-tools .tool {
    width: 25px;
    margin-right: 1px;
}
.filter {
    display: flex;
    height: 26px;
    border-bottom: 1px solid #333;
}
.filter .tool {
    width: 25px;
}
.filter-box {
    display: flex;
    flex: 1;
    align-items: center;
    padding-left: 7px;
    background: #fff;
}
.filter-box input {
    flex: 1;
    min-width: 0;
}
.tree {
    margin: 0;
    padding: 1px 0 0;
    list-style: none;
}
.tree li {
    display: flex;
    height: 26px;
    border-bottom: 1px solid #dcdcdc;
}
.tree li:last-child {
    height: 25px;
    border-bottom: 0;
}
.flags {
    display: flex;
    align-items: center;
    gap: 12px;
    width: 51px;
    padding-left: 5px;
    background: #e4e4e4;
}
.eye {
    width: 14px;
    height: 10px;
}
.member {
    width: 14px;
    height: 14px;
}
.node {
    display: flex;
    align-items: center;
    padding-top: 2px;
}
.root {
    gap: 2px;
    padding-left: 13px;
}
.origin {
    gap: 4px;
    padding-left: 25px;
}
.operation {
    gap: 1px;
    padding-left: 33px;
}
.open {
    margin-right: 2px;
    border: 3px solid transparent;
    border-top: 5px solid #2b2b2b;
    border-bottom: 0;
}
.closed {
    border: 3px solid transparent;
    border-left: 4px solid #2b2b2b;
    border-right: 0;
}
.dot {
    width: 8px;
    height: 8px;
    border-radius: 50%;
    background: #2b2b2b;
}
.tree-end {
    height: 5px;
    background: #82dae6;
}
.panel-bottom {
    height: 94px;
    margin-top: auto;
    border-top: 1px solid #696969;
}

/* model view */
.viewport {
    position: relative;
    flex: 1;
    background: linear-gradient(#dcdcdc, #c2c2c6 50%, #a8a9b0);
}
.view-tools {
    position: absolute;
    top: 0;
    left: 0;
    z-index: 1;
    display: flex;
    height: 26px;
    background: #f2f2f2;
    border-bottom: 1px solid #696969;
}
.view-grip {
    width: 17px;
    padding: 3px;
    background: #dcdcdc;
    border-right: 1px solid #696969;
}
.view-grip i {
    display: block;
    width: 11px;
    height: 6px;
    background: conic-gradient(transparent 75%, #555 0) 0 0 / 3px 3px;
}
.set {
    display: flex;
    border-right: 1px solid #696969;
}
.lit {
    padding-left: 1px;
}
.view-tools .tool {
    width: 27px;
}
.drop {
    display: flex;
    align-items: center;
    justify-content: center;
    width: 21px;
}
.view-tools .arrow {
    border-width: 5px 5px 0;
}
.scene {
    width: 100%;
    height: 100%;
    stroke: none;
}
.scene text {
    font: 13px/16px "DejaVu Sans Mono", monospace;
}
.edge {
    stroke: #111;
    stroke-width: 1.2;
}
.plane {
    stroke-width: 1.2;
}
.green { stroke: #85f60c; }
.blue { stroke: #1b95f2; }
.red { stroke: #f48a86; }

.watermark {
    position: absolute;
    top: 0;
    left: 0;
    width: 100%;
    height: 100%;
    stroke: none;
    pointer-events: none;
}
.watermark text {
    fill: rgba(120, 128, 190, 0.3);
    font: italic bold 22px/24px "Liberation Serif", serif;
}
```
